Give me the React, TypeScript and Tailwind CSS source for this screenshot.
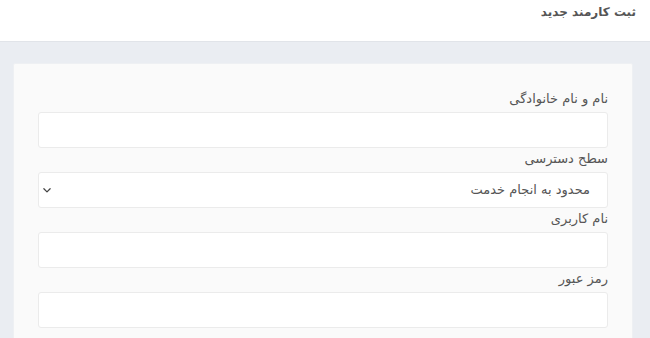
import { useState } from 'react'

const FONT = { fontFamily: '"DejaVu Sans", "Noto Sans", sans-serif' }

interface FieldProps {
  label: string
  children: React.ReactNode
}

function Field({ label, children }: FieldProps) {
  return (
    <div>
      <label className="block h-6 leading-[21px] text-[13px] text-[#555]">{label}</label>
      {children}
    </div>
  )
}

const inputCls =
  'block w-full h-9 rounded-[3px] border border-[#ebebeb] bg-white px-3 text-[13px] text-[#555] focus:outline-none'

export default function App() {
  const [form, setForm] = useState({ name: '', role: 'limited', username: '', password: '' })

  return (
    <div dir="rtl" style={FONT} className="min-h-[338px] bg-[#eaedf2]">
      {/* top bar */}
      <header className="h-[42px] bg-white border-b border-[#e1e4e9] px-[14px] pt-[3px]">
        <h1 className="text-[12px] font-bold text-[#555] leading-[18px]">ثبت کارمند جدید</h1>
      </header>

      <div className="pl-[13px] pr-[17px] pt-[21px]">
        <section className="rounded-[2px] border border-[#eef0f3] bg-[#fafafa] px-6 pt-6 pb-6">
          <Field label="نام و نام خانوادگی">
            <input
              type="text"
              value={form.name}
              onChange={(e) => setForm({ ...form, name: e.target.value })}
              className={inputCls}
            />
          </Field>
          <Field label="سطح دسترسی">
            <div className="relative">
              <select
                value={form.role}
                onChange={(e) => setForm({ ...form, role: e.target.value })}
                className={inputCls + ' appearance-none pr-[17px]'}
              >
                <option value="limited">محدود به انجام خدمت</option>
                <option value="full">دسترسی کامل</option>
              </select>
              <svg
                className="pointer-events-none absolute left-[4px] top-[13px]"
                width="10"
                height="10"
                viewBox="0 0 16 16"
                fill="none"
                stroke="#444"
                strokeWidth="2"
                strokeLinecap="round"
                strokeLinejoin="round"
              >
                <path d="M3 6l5 5 5-5" />
              </svg>
            </div>
          </Field>
          <Field label="نام کاربری">
            <input
              type="text"
              value={form.username}
              onChange={(e) => setForm({ ...form, username: e.target.value })}
              className={inputCls}
            />
          </Field>
          <Field label="رمز عبور">
            <input
              type="password"
              value={form.password}
              onChange={(e) => setForm({ ...form, password: e.target.value })}
              className={inputCls}
            />
          </Field>
        </section>
      </div>
    </div>
  )
}
